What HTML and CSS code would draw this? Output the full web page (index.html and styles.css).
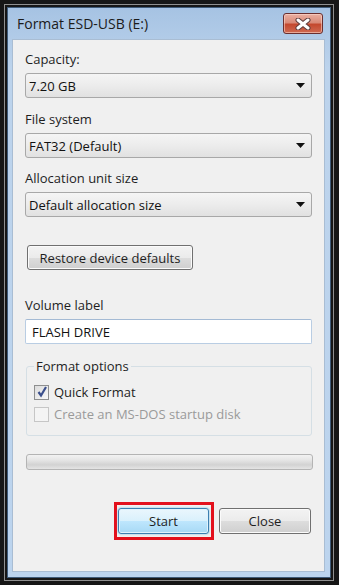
FILE: index.html
```html
<!DOCTYPE html>
<html lang="en">

<head>
    <meta charset="UTF-8">
    <meta name="viewport" content="width=device-width, initial-scale=1.0">
    <title>Format ESD-USB (E:)</title>
    <link rel="stylesheet" href="styles.css">
</head>

<body>
    <div class="screen">
        <div class="rim">
            <div class="window">
                <div class="titlebar">
                    <span class="title">Format ESD-USB (E:)</span>
                    <button class="close-x" type="button">
                        <svg width="16" height="12" viewBox="0 0 16 12">
                            <path d="M3 2 L13 10 M13 2 L3 10" stroke="#5b3b3b" stroke-width="5" stroke-linecap="round" fill="none" />
                            <path d="M3 2 L13 10 M13 2 L3 10" stroke="#ffffff" stroke-width="3" stroke-linecap="round" fill="none" />
                        </svg>
                    </button>
                </div>

                <div class="content">
                    <div class="field">
                        <label>Capacity:</label>
                        <div class="combo">
                            <span>7.20 GB</span>
                            <svg class="arrow" width="9" height="5" viewBox="0 0 9 5"><path d="M0 0 H9 L4.5 5 Z" /></svg>
                        </div>
                    </div>

                    <div class="field f2">
                        <label>File system</label>
                        <div class="combo">
                            <span>FAT32 (Default)</span>
                            <svg class="arrow" width="9" height="5" viewBox="0 0 9 5"><path d="M0 0 H9 L4.5 5 Z" /></svg>
                        </div>
                    </div>

                    <div class="field f3">
                        <label>Allocation unit size</label>
                        <div class="combo">
                            <span>Default allocation size</span>
                            <svg class="arrow" width="9" height="5" viewBox="0 0 9 5"><path d="M0 0 H9 L4.5 5 Z" /></svg>
                        </div>
                    </div>

                    <button class="btn restore" type="button">Restore device defaults</button>

                    <div class="field volume">
                        <label>Volume label</label>
                        <div class="textbox">FLASH DRIVE</div>
                    </div>

                    <fieldset class="options">
                        <legend>Format options</legend>
                        <div class="check">
                            <span class="box">
                                <svg width="12" height="12" viewBox="0 0 12 12"><path d="M2.5 6 L5 9.5 L10 1" stroke="#3b4f8c" stroke-width="2.2" fill="none" /></svg>
                            </span>
                            Quick Format
                        </div>
                        <div class="check disabled">
                            <span class="box"></span>
                            Create an MS-DOS startup disk
                        </div>
                    </fieldset>

                    <div class="progress"></div>

                    <div class="actions">
                        <div class="marker">
                            <button class="btn start" type="button">Start</button>
                        </div>
                        <button class="btn close" type="button">Close</button>
                    </div>
                </div>
            </div>
        </div>
    </div>
</body>

</html>
```

FILE: styles.css
```css
body {
    margin: 0;
    background-color: #161616;
    font-family: "Open Sans", "Noto Sans", sans-serif;
    font-size: 13px;
    color: #1e1e1e;
}

.screen {
    width: 339px;
    height: 585px;
    box-sizing: border-box;
    padding: 4px 5px 4px 4px;
}

.rim {
    height: 100%;
    box-sizing: border-box;
    border: 1px solid #8f8f8f;
    padding: 2px;
}

.window {
    height: 100%;
    box-sizing: border-box;
    border: 1px solid #3e5a78;
    background: linear-gradient(#a6c3e3, #bcd3ec 60px, #bcd4ee);
    padding: 0 5px 5px 4px;
    display: flex;
    flex-direction: column;
}

.titlebar {
    height: 31px;
    display: flex;
    align-items: center;
    justify-content: space-between;
    padding-left: 5px;
}

.title {
    font-size: 14px;
    color: #1b1b1b;
}

.close-x {
    width: 40px;
    height: 21px;
    margin-right: 2px;
    padding: 0;
    border: 1px solid #6a2f2f;
    border-radius: 3px;
    background: linear-gradient(#eab0a2, #d98a78 45%, #c4492f 55%, #cf6a52);
    box-shadow: inset 0 0 0 1px rgba(255, 220, 210, 0.55);
    display: flex;
    align-items: center;
    justify-content: center;
}

.content {
    flex: 1;
    background-color: #f0f0f0;
    border: 1px solid #a9bdd3;
    padding: 10px 12px 0 12px;
}

label {
    display: block;
    line-height: 18px;
    margin-bottom: 5px;
}

.f2 {
    margin-top: 12px;
}

.f3 {
    margin-top: 11px;
}

.combo {
    height: 25px;
    box-sizing: border-box;
    border: 1px solid #a8a8a8;
    border-radius: 3px;
    background: linear-gradient(#f5f5f5, #ececec 50%, #e1e1e1);
    display: flex;
    align-items: center;
    justify-content: space-between;
    padding: 0 6px 0 3px;
    color: #111;
}

.arrow {
    fill: #111;
}

.btn {
    font-family: "Open Sans", "Noto Sans", sans-serif;
    font-size: 13px;
    color: #1e1e1e;
    height: 25px;
    padding: 0;
    border: 1px solid #707070;
    border-radius: 3px;
    background: linear-gradient(#f3f3f3, #ebebeb 50%, #dddddd 51%, #cfcfcf);
    box-shadow: inset 0 0 0 1px #fbfbfb;
}

.restore {
    display: block;
    width: 166px;
    margin: 28px 0 0 2px;
}

.volume {
    margin-top: 26px;
}

.volume label {
    margin-bottom: 5px;
}

.textbox {
    height: 25px;
    box-sizing: border-box;
    background-color: #fff;
    border: 1px solid #b9cde3;
    border-top-color: #a4bad4;
    border-radius: 2px;
    display: flex;
    align-items: center;
    padding-left: 6px;
    color: #111;
}

.options {
    margin: 13px 0 0 1px;
    padding: 6px 7px 10px 7px;
    border: 1px solid #d5dfe5;
    border-radius: 3px;
}

.options legend {
    padding: 0 2px;
    line-height: 18px;
}

.check {
    height: 22px;
    display: flex;
    align-items: center;
    gap: 5px;
}

.box {
    width: 15px;
    height: 15px;
    box-sizing: border-box;
    border: 1px solid #8e8f8f;
    background: linear-gradient(135deg, #dcdcdc, #f8f8f8);
    display: flex;
    align-items: center;
    justify-content: center;
}

.disabled {
    color: #9a9a9a;
}

.disabled .box {
    border-color: #c6c6c6;
    background: #f4f4f4;
}

.progress {
    height: 16px;
    box-sizing: border-box;
    margin: 18px -1px 0 1px;
    border: 1px solid #b4b4b4;
    border-radius: 3px;
    background: linear-gradient(#f2f2f2, #e6e6e6 35%, #d2d2d2 70%, #e4e4e4);
}

.actions {
    margin-top: 32px;
    display: flex;
    justify-content: flex-end;
    align-items: center;
    gap: 5px;
    padding-right: 1px;
}

.marker {
    border: 3px solid #e3101c;
    padding: 3px 2px 3px 1px;
}

.start {
    display: block;
    width: 91px;
    height: 26px;
    border-color: #3c7fb1;
    background: linear-gradient(#eaf6fd, #d9f0fc 50%, #bee6fd 51%, #a7d9f5);
    box-shadow: inset 0 0 0 1px #dff2fc, 0 0 2px #5cb6e6;
}

.close {
    width: 92px;
    height: 26px;
}
```
